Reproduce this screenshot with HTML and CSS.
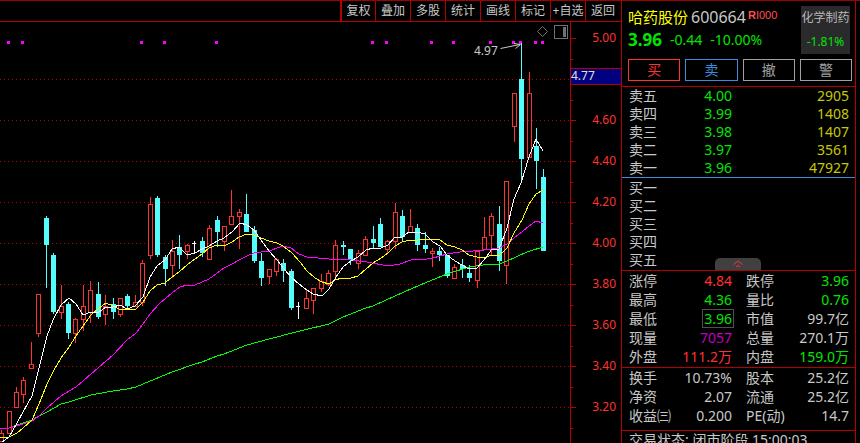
FILE: index.html
```
<!DOCTYPE html>
<html lang="zh-CN">
<head>
<meta charset="utf-8">
<title>哈药股份 600664</title>
<link rel="stylesheet" href="styles.css">
</head>
<body>
<main class="app">
  <section class="chart">
    <nav class="toolbar">
      <button type="button">复权</button>
      <button type="button">叠加</button>
      <button type="button">多股</button>
      <button type="button">统计</button>
      <button type="button">画线</button>
      <button type="button">标记</button>
      <button type="button">+自选</button>
      <button type="button">返回</button>
    </nav>
    <svg class="plot" viewBox="0 22 621 421" role="img" aria-label="K线图">
      <g id="grid" class="grid"></g>
      <g id="axis" class="axis"></g>
      <g id="markers" class="markers"></g>
      <g id="candles"></g>
      <polyline class="ma ma-green" points="0,429 9,428 23,423 32,420 39,416 47,412 61,404 69,402 91,395 113,391 127,389 136,387 143,384 160,377 172,372 195,364 202,362 217,356 224,354 247,345 269,339 300,331 329,324 343,317 366,308 373,306 395,296 420,285 447,274 469,267 483,265 499,264 507,261 527,252 543,247"/>
      <polyline class="ma ma-magenta" points="0,428 9,428 23,424 32,421 39,416 47,408 61,396 76,387 83,381 91,374 98,368 106,361 113,355 127,340 136,333 143,324 150,314 160,303 172,293 180,287 187,285 195,285 202,282 209,279 224,268 232,264 239,260 247,256 254,253 269,251 283,246 291,248 299,254 307,257 329,259 351,260 367,262 388,266 400,264 411,260 427,259 433,258 447,254 460,252 473,251 484,250 499,248 507,244 514,238 522,232 529,226 536,221 543,223"/>
      <polyline class="ma ma-yellow" points="0,438 9,437 17,433 23,428 32,420 39,404 47,384 54,370 61,358 69,347 76,336 83,326 91,315 98,309 106,303 113,306 121,310 127,309 136,309 143,302 150,291 157,285 165,283 172,277 179,272 187,265 195,259 202,254 209,248 217,245 224,246 232,242 239,237 247,234 254,235 261,238 269,241 277,243 283,246 292,253 300,262 307,271 315,278 322,282 329,284 335,280 342,278 351,278 358,276 366,269 373,263 381,258 388,253 395,246 402,242 410,240 418,240 427,239 435,239 440,240 447,245 455,247 462,250 469,255 477,257 484,258 492,255 499,256 507,248 514,233 522,220 529,204 536,194 543,190"/>
      <polyline class="ma ma-white" points="2,442 9,437 17,423 23,412 32,396 39,368 47,336 53,320 61,305 69,298 76,304 83,315 91,312 98,313 106,307 113,307 120,305 127,309 135,306 143,297 150,277 157,266 165,260 172,249 179,247 187,255 195,253 202,249 209,246 217,241 224,238 232,232 240,223 247,225 254,230 261,240 269,251 277,260 284,269 292,278 299,284 307,290 313,294 322,296 329,289 336,277 343,267 351,261 358,257 366,250 373,248 381,248 388,245 395,237 402,237 409,232 417,232 425,234 433,242 440,246 447,255 455,261 462,265 469,269 477,268 484,260 492,249 499,249 507,228 514,199 521,183 529,157 536,139 543,151"/>
      <text class="note" x="474" y="55">4.97</text>
      <path class="arrow" d="M500.500 48.500L520 44.500M514 43.500L520.500 44.500L515.500 48.500"/>
      <path class="tool" d="M537.500 31.500L542.500 26.500L547.500 31.500L542.500 36.500Z"/>
      <rect class="tool" x="554.500" y="25.500" width="13" height="13"/>
      <rect class="tool-fill" x="563" y="27" width="3" height="10"/>
    </svg>
  </section>

  <aside class="panel">
    <header class="quote">
      <div class="quote-top">
        <div class="quote-main">
          <div class="name-row"><span class="name">哈药股份</span><span class="code">600664</span><span class="tag"><b>R</b>I000</span></div>
          <div class="price-row"><b>3.96</b><span>-0.44</span><span>-10.00%</span></div>
        </div>
        <a class="sector" href="#"><span>化学制药</span><span class="down">-1.81%</span></a>
      </div>
      <div class="actions">
        <button type="button" class="buy">买</button>
        <button type="button" class="sell">卖</button>
        <button type="button">撤</button>
        <button type="button">警</button>
      </div>
    </header>

    <table class="book asks">
      <tr><th scope="row">卖五</th><td class="green">4.00</td><td class="yellow">2905</td></tr>
      <tr><th scope="row">卖四</th><td class="green">3.99</td><td class="yellow">1408</td></tr>
      <tr><th scope="row">卖三</th><td class="green">3.98</td><td class="yellow">1407</td></tr>
      <tr><th scope="row">卖二</th><td class="green">3.97</td><td class="yellow">3561</td></tr>
      <tr><th scope="row">卖一</th><td class="green">3.96</td><td class="yellow">47927</td></tr>
    </table>
    <div class="bids">
      <table class="book">
        <tr><th scope="row">买一</th><td></td><td></td></tr>
        <tr><th scope="row">买二</th><td></td><td></td></tr>
        <tr><th scope="row">买三</th><td></td><td></td></tr>
        <tr><th scope="row">买四</th><td></td><td></td></tr>
        <tr><th scope="row">买五</th><td></td><td></td></tr>
      </table>
      <button type="button" class="collapse" aria-label="收起"><svg viewBox="0 0 12 8"><path d="M1.500 4.500L6 1L10.500 4.500M4 7L6 5.500L8 7"/></svg></button>
    </div>

    <table class="stats">
      <tr><th scope="row">涨停</th><td class="red">4.84</td><th scope="row">跌停</th><td class="green">3.96</td></tr>
      <tr><th scope="row">最高</th><td class="green">4.36</td><th scope="row">量比</th><td class="green">0.76</td></tr>
      <tr><th scope="row">最低</th><td class="green"><span class="boxed">3.96</span></td><th scope="row">市值</th><td>99.7亿</td></tr>
      <tr><th scope="row">现量</th><td class="purple">7057</td><th scope="row">总量</th><td>270.1万</td></tr>
      <tr><th scope="row">外盘</th><td class="red">111.2万</td><th scope="row">内盘</th><td class="green">159.0万</td></tr>
    </table>
    <table class="stats finance">
      <tr><th scope="row">换手</th><td>10.73%</td><th scope="row">股本</th><td>25.2亿</td></tr>
      <tr><th scope="row">净资</th><td>2.07</td><th scope="row">流通</th><td>25.2亿</td></tr>
      <tr><th scope="row">收益㈢</th><td>0.200</td><th scope="row">PE(动)</th><td>14.7</td></tr>
    </table>
    <p class="status">交易状态: 闭市阶段 15:00:03</p>
  </aside>
</main>
<script src="chart.js"></script>
</body>
</html>
```
FILE: styles.css
```
* { box-sizing: border-box; }

body {
  margin: 0;
  background: #000;
  color: #c8c8c8;
  font: 14px/18px "Noto Sans", "Noto Sans CJK SC", sans-serif;
  overflow: hidden;
}

button {
  margin: 0;
  padding: 0;
  background: none;
  color: inherit;
  font: inherit;
}

.app {
  display: grid;
  grid-template-columns: minmax(0, 1fr) 235px;
  height: 100vh;
  padding-right: 4px;
  border-top: 1px solid #a00000;
  overflow: hidden;
}

/* Chart */
.toolbar {
  display: flex;
  justify-content: flex-end;
  height: 21px;
  padding-right: 1px;
  border-bottom: 1px solid #b40000;
}

.toolbar button {
  width: 35px;
  border: 0;
  border-left: 1px solid #b40000;
  font-size: 12px;
  line-height: 20px;
  white-space: nowrap;
  overflow: hidden;
}

.toolbar button:first-child { border-left-width: 2px; }

.plot {
  display: block;
  width: 100%;
  height: auto;
  font-size: 12px;
}

.grid line {
  stroke: #b40000;
  stroke-dasharray: 1 3;
}

.axis line { stroke: #b40000; }
.axis text { fill: #ff3232; text-anchor: end; }
.axis .cursor { fill: #000080; }
.axis .cursor-label { fill: #e0e0e0; text-anchor: start; }
.markers { fill: #ff00ff; }
.note { fill: #c8c8c8; }
.arrow { fill: none; stroke: #c8c8c8; }
.tool { fill: none; stroke: #707070; }
.tool-fill { fill: #707070; }

.up { fill: none; stroke: #ff3232; }
.fall { fill: #54fcfc; }
.fall-wick { stroke: #54fcfc; }
.flat { fill: none; stroke: #fff; }

.ma { fill: none; stroke-width: 1; shape-rendering: crispEdges; }
.ma-green { stroke: #00ff00; }
.ma-magenta { stroke: #ff00ff; }
.ma-yellow { stroke: #ffff00; }
.ma-white { stroke: #fff; }

/* Quote panel */
.panel {
  border: solid #b40000;
  border-width: 0 1px;
  overflow: hidden;
}

.quote {
  height: 86px;
  padding: 5px 3px 0 6px;
  border-bottom: 1px solid #b40000;
}

.quote-top {
  display: flex;
  justify-content: space-between;
  padding-right: 2px;
}

.name-row,
.price-row {
  display: flex;
  align-items: center;
  height: 24px;
  white-space: nowrap;
}

.name-row { height: 22px; }
.name { color: #ffff00; font-size: 15px; }
.code { margin-left: 3px; font-size: 16px; }

.tag {
  align-self: flex-start;
  margin: 3px 0 0 2px;
  color: #ff5050;
  font: 11px/12px "Liberation Sans Narrow", "Liberation Sans", sans-serif;
}

.price-row { gap: 8px; color: #00e600; }
.price-row b { font-size: 17px; }

.sector {
  display: flex;
  flex-direction: column;
  align-items: center;
  width: 49px;
  height: 48px;
  background: #2a2a2c;
  color: #b8b8b8;
  font-size: 12px;
  line-height: 24px;
  text-decoration: none;
  white-space: nowrap;
}

.sector .down { color: #00e600; }

.actions {
  display: grid;
  grid-template-columns: repeat(4, 1fr);
  gap: 5px;
  margin-top: 5px;
}

.actions button {
  height: 22px;
  border: 1px solid #a0a0a0;
  color: #a0a0a0;
  line-height: 20px;
}

.actions .buy { border-color: #ff3232; color: #ff3232; }
.actions .sell { border-color: #3c8cdc; color: #3c8cdc; }

table {
  width: 100%;
  border-spacing: 0;
  table-layout: fixed;
}

th,
td {
  padding: 0;
  font-weight: normal;
  white-space: nowrap;
}

th { text-align: left; }
td { text-align: right; }

.book th,
.book td { height: 18px; }
.book th { width: 47px; padding-left: 7px; }
.book td:nth-child(2) { width: 63px; }
.book td:last-child { padding-right: 6px; }
.asks { border-bottom: 1px solid #3c8cdc; }

.bids {
  position: relative;
  padding: 1px 0;
  border-bottom: 1px solid #b40000;
}

.collapse {
  position: absolute;
  bottom: 0;
  left: 40%;
  display: grid;
  place-items: center;
  width: 46px;
  height: 12px;
  border: 0;
  border-radius: 5px 5px 0 0;
  background: #404040;
}

.collapse svg {
  width: 12px;
  height: 8px;
  fill: none;
  stroke: #ff3232;
}

.stats { border-bottom: 1px solid #b40000; padding-bottom: 1px; }
.stats th,
.stats td { height: 19px; }
.stats th:first-child { width: 47px; padding-left: 7px; }
.stats td:nth-child(2) { width: 63px; }
.stats th:nth-child(3) { width: 58px; padding-left: 14px; }
.stats td:last-child { padding-right: 6px; }
.finance { padding-bottom: 5px; }

.boxed {
  display: inline-block;
  margin-right: -2px;
  padding: 0 1px;
  border: 1px solid #505050;
  line-height: 17px;
}

.status {
  margin: 0;
  padding-left: 7px;
  line-height: 18px;
  white-space: nowrap;
}

.red { color: #ff3232; }
.green { color: #00e600; }
.yellow { color: #c8c800; }
.purple { color: #c000c0; }
```
FILE: chart.js
```
const NS = "http://www.w3.org/2000/svg";

function add(parent, tag, attrs, text) {
  const el = document.createElementNS(NS, tag);
  for (const key in attrs) el.setAttribute(key, attrs[key]);
  if (text) el.textContent = text;
  parent.appendChild(el);
}

const grid = document.getElementById("grid");
const axis = document.getElementById("axis");
const markers = document.getElementById("markers");
const candles = document.getElementById("candles");

// Price scale: 41 units per 0.20
add(axis, "line", { x1: 570.5, y1: 22, x2: 570.5, y2: 443 });
for (let i = 0; i < 10; i++) {
  const y = 38.5 + 41 * i;
  if (i > 0) add(grid, "line", { x1: 0, y1: y, x2: 570, y2: y });
  add(axis, "line", { x1: 571, y1: y, x2: 576, y2: y });
  add(axis, "line", { x1: 571, y1: y + 21, x2: 573, y2: y + 21 });
  if (i !== 1) add(axis, "text", { x: 616, y: y + 3.5 }, (5 - i * 0.2).toFixed(2));
}
add(axis, "rect", { class: "cursor", x: 571, y: 69, width: 50, height: 15 });
add(axis, "line", { x1: 571, y1: 68.5, x2: 621, y2: 68.5 });
add(axis, "line", { x1: 571, y1: 84.5, x2: 621, y2: 84.5 });
add(axis, "text", { class: "cursor-label", x: 571, y: 80 }, "4.77");

for (const x of [8, 22, 141, 164, 216, 372, 386, 431, 453, 490, 513, 520, 535, 542]) {
  add(markers, "rect", { x: x - 1, y: 41, width: 3, height: 3 });
}

// type, x, high, body top, body bottom, low
const data = [
  ["r", 1, 430, 433, 441, 441], ["r", 9, 411, 411, 433, 433], ["r", 16, 387, 392, 407, 407],
  ["r", 23, 377, 380, 394, 403], ["r", 31, 342, 364, 368, 368], ["r", 38, 294, 294, 333, 337],
  ["c", 46, 216, 218, 245, 288], ["c", 53, 253, 255, 312, 314], ["r", 61, 285, 306, 312, 319],
  ["c", 68, 302, 304, 333, 339], ["r", 75, 318, 319, 333, 343], ["r", 83, 285, 306, 319, 331],
  ["r", 90, 281, 290, 312, 323], ["c", 98, 282, 294, 317, 319], ["r", 105, 295, 306, 314, 325],
  ["c", 113, 298, 304, 312, 319], ["r", 120, 298, 298, 314, 317], ["c", 127, 294, 296, 306, 308],
  ["r", 135, 295, 302, 306, 306], ["r", 142, 260, 263, 302, 306], ["r", 150, 197, 204, 255, 259],
  ["c", 157, 196, 198, 255, 257], ["c", 165, 255, 257, 269, 286], ["r", 172, 240, 251, 265, 278],
  ["c", 179, 235, 247, 255, 269], ["r", 187, 244, 245, 251, 259], ["w", 194, 241, 243, 243, 253],
  ["c", 202, 237, 241, 253, 257], ["r", 209, 225, 228, 259, 259], ["c", 217, 216, 220, 232, 247],
  ["r", 224, 226, 226, 241, 251], ["r", 231, 190, 216, 224, 224], ["r", 239, 209, 212, 216, 249],
  ["c", 246, 194, 214, 232, 232], ["c", 254, 226, 230, 261, 263], ["c", 261, 253, 261, 278, 286],
  ["r", 269, 269, 269, 276, 284], ["r", 276, 258, 259, 271, 276], ["c", 283, 259, 263, 271, 282],
  ["c", 291, 269, 271, 308, 310], ["w", 298, 302, 306, 306, 319], ["r", 306, 290, 298, 308, 308],
  ["r", 313, 288, 288, 300, 314], ["r", 321, 274, 281, 288, 292], ["r", 328, 270, 273, 284, 286],
  ["r", 335, 240, 245, 271, 277], ["c", 343, 241, 245, 247, 255], ["c", 350, 249, 249, 260, 265],
  ["r", 358, 250, 253, 263, 269], ["r", 365, 236, 239, 255, 255], ["c", 373, 226, 239, 243, 248],
  ["c", 380, 218, 224, 247, 247], ["r", 387, 240, 241, 249, 253], ["r", 395, 203, 212, 241, 249],
  ["c", 402, 210, 216, 237, 241], ["r", 410, 209, 226, 232, 232], ["c", 417, 224, 228, 245, 251],
  ["c", 425, 232, 245, 249, 253], ["r", 432, 248, 251, 253, 267], ["c", 439, 247, 251, 255, 261],
  ["c", 447, 255, 255, 276, 278], ["r", 454, 264, 267, 278, 278], ["c", 462, 259, 265, 269, 278],
  ["c", 469, 265, 273, 278, 282], ["r", 477, 251, 251, 280, 288], ["r", 484, 217, 237, 249, 249],
  ["r", 491, 213, 216, 235, 255], ["c", 499, 206, 224, 261, 271], ["r", 506, 181, 181, 265, 284],
  ["r", 514, 93, 93, 126, 142], ["c", 521, 43, 79, 159, 183], ["r", 529, 72, 93, 157, 157],
  ["c", 536, 128, 146, 161, 189], ["c", 543, 169, 177, 251, 251]
];

for (const [type, px, high, top, bottom, low] of data) {
  const x = px + 0.5;
  if (type === "r") {
    add(candles, "rect", { class: "up", x: x - 2, y: top + 0.5, width: 4, height: bottom - top });
    add(candles, "path", { class: "up", d: `M${x} ${high}V${top}M${x} ${bottom + 1}V${Math.max(low, bottom + 1)}` });
  } else if (type === "c") {
    add(candles, "rect", { class: "fall", x: px - 2, y: top, width: 5, height: bottom - top });
    add(candles, "line", { class: "fall-wick", x1: x, y1: high, x2: x, y2: low });
  } else {
    add(candles, "path", { class: "flat", d: `M${x} ${high}V${low}M${px - 2} ${top + 0.5}H${px + 2}` });
  }
}
```
